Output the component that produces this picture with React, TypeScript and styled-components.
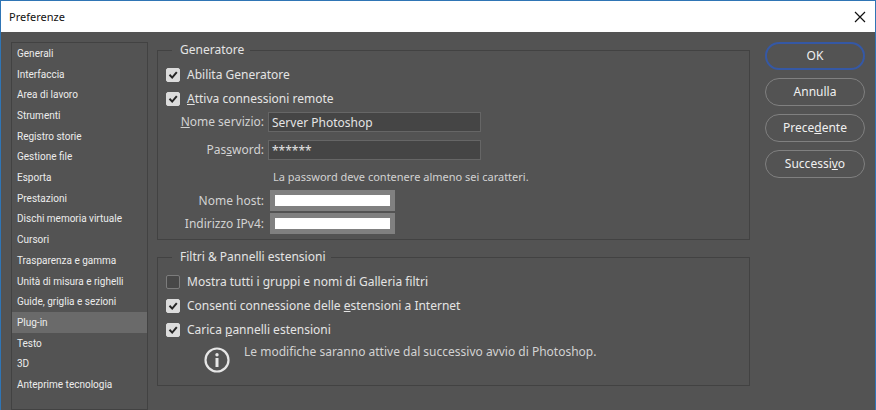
import React, { useState } from 'react';
import type { InputHTMLAttributes, ReactNode } from 'react';
import styled, { createGlobalStyle } from 'styled-components';

const GlobalStyle = createGlobalStyle`
  * { box-sizing: border-box; }
  body {
    margin: 0;
    background: #535353;
    color: #e4e4e4;
    font: 12px/16px "Noto Sans", "Open Sans", sans-serif;
  }
  button, input { font: inherit; color: inherit; }
`;

const Window = styled.div`
  display: flex;
  flex-direction: column;
  min-height: 100vh;
  border: 1px solid #2f75b5;
  border-bottom: 0;
  background: #535353;
`;

const TitleBar = styled.header`
  display: flex;
  align-items: center;
  justify-content: space-between;
  height: 31px;
  padding: 0 9px 0 8px;
  background: #fff;
  color: #111;
`;

const Title = styled.h1`
  margin: 0;
  font-size: 11px;
  font-weight: 400;
`;

const CloseButton = styled.button`
  display: flex;
  padding: 0;
  border: 0;
  background: none;
`;

const Body = styled.div`
  display: flex;
  flex: 1;
  padding: 10px 10px 0;
`;

const Sidebar = styled.nav`
  display: flex;
  flex: 0 0 137px;
  flex-direction: column;
  margin-right: 9px;
  padding-bottom: 14px;
  border: 1px solid #424242;
`;

const SidebarItem = styled.button<{ $active: boolean }>`
  display: flex;
  flex: 1;
  align-items: center;
  padding: 1px 5px 0;
  border: 0;
  background: ${({ $active }) => ($active ? '#6a6a6a' : 'transparent')};
  color: #ececec;
  font: 10px/16px Roboto, sans-serif;
  white-space: nowrap;
`;

const Main = styled.main`
  display: flex;
  flex: 1;
  flex-direction: column;
  gap: 9px;
  min-width: 0;
`;

const Group = styled.fieldset`
  min-width: 0;
  margin: 0;
  padding: 5px 8px;
  border: 1px solid #424242;
`;

const Legend = styled.legend`
  margin-left: 6px;
  padding: 0 6px 0 8px;
`;

const CheckLabel = styled.label`
  display: flex;
  align-items: center;
  gap: 7px;
  height: 24px;
  white-space: nowrap;
`;

const CheckFrame = styled.span`
  display: grid;
  width: 14px;
  height: 14px;

  > * { grid-area: 1 / 1; }
`;

const CheckInput = styled.input`
  width: 14px;
  height: 14px;
  margin: 0;
  appearance: none;
  border: 1px solid #7c7c7c;
  border-radius: 2px;
  background: #484848;

  &:checked {
    border-color: #dcdcdc;
    background: #dcdcdc;
  }

  & + svg { visibility: hidden; pointer-events: none; }
  &:checked + svg { visibility: visible; }
`;

const FieldRow = styled.div<{ $gap: number }>`
  display: flex;
  align-items: center;
  margin-bottom: ${({ $gap }) => $gap}px;
`;

const FieldLabel = styled.label`
  flex: 0 0 98px;
  margin-right: 4px;
  color: #d2d2d2;
  text-align: right;
  white-space: nowrap;
`;

const FieldList = styled.div`
  padding-top: 1px;
`;

const TextField = styled.input`
  width: 213px;
  height: 20px;
  padding: 0 3px;
  border: 1px solid #666;
  background: #454545;
`;

const HiddenValue = styled.input`
  width: 125px;
  height: 21px;
  margin-left: 2px;
  padding: 0;
  border: 5px solid #808080;
  background: #fff;
  color: #222;
`;

const Note = styled.p`
  margin: 0 0 4px 107px;
  color: #d2d2d2;
  font-size: 11px;
  line-height: 18px;
`;

const InfoRow = styled.div`
  display: flex;
  align-items: flex-start;
  gap: 14px;
  padding: 0 0 7px 38px;
  color: #d2d2d2;

  svg { flex: none; margin-top: 5px; }
`;

const InfoText = styled.p`
  margin: 0;
  line-height: 20px;
`;

const Actions = styled.div`
  display: flex;
  flex: 0 0 100px;
  flex-direction: column;
  gap: 8px;
  margin-left: 15px;
`;

const ActionButton = styled.button<{ $primary?: boolean }>`
  height: 28px;
  padding: 0;
  border: ${({ $primary }) => ($primary ? '2px solid #3558a5' : '1px solid #808080')};
  border-radius: 14px;
  background: none;
  color: #f0f0f0;
`;

interface CheckProps extends InputHTMLAttributes<HTMLInputElement> {
  children: ReactNode;
}

function Check({ children, ...rest }: CheckProps) {
  return (
    <CheckLabel>
      <CheckFrame>
        <CheckInput type="checkbox" {...rest} />
        <svg width="14" height="14" viewBox="0 0 14 14" fill="none" aria-hidden="true">
          <path d="M3.5 6.8 L6.2 9.6 L10.8 4.2" stroke="#262626" strokeWidth="2" />
        </svg>
      </CheckFrame>
      <span>{children}</span>
    </CheckLabel>
  );
}

const sections = [
  'Generali',
  'Interfaccia',
  'Area di lavoro',
  'Strumenti',
  'Registro storie',
  'Gestione file',
  'Esporta',
  'Prestazioni',
  'Dischi memoria virtuale',
  'Cursori',
  'Trasparenza e gamma',
  'Unità di misura e righelli',
  'Guide, griglia e sezioni',
  'Plug-in',
  'Testo',
  '3D',
  'Anteprime tecnologia',
];

export default function App() {
  const [section, setSection] = useState('Plug-in');

  return (
    <>
      <GlobalStyle />
      <Window>
        <TitleBar>
          <Title>Preferenze</Title>
          <CloseButton aria-label="Chiudi">
            <svg width="12" height="12" viewBox="0 0 12 12" stroke="#111" strokeWidth="1.2" aria-hidden="true">
              <path d="M1 1 L11 11 M11 1 L1 11" />
            </svg>
          </CloseButton>
        </TitleBar>
        <Body>
          <Sidebar>
            {sections.map((name) => (
              <SidebarItem key={name} $active={name === section} onClick={() => setSection(name)}>
                {name}
              </SidebarItem>
            ))}
          </Sidebar>
          <Main>
            <Group>
              <Legend>Generatore</Legend>
              <Check defaultChecked>Abilita Generatore</Check>
              <Check defaultChecked><u>A</u>ttiva connessioni remote</Check>
              <FieldList>
                <FieldRow $gap={8}>
                  <FieldLabel htmlFor="service"><u>N</u>ome servizio:</FieldLabel>
                  <TextField id="service" defaultValue="Server Photoshop" />
                </FieldRow>
                <FieldRow $gap={8}>
                  <FieldLabel htmlFor="password">Pas<u>s</u>word:</FieldLabel>
                  <TextField id="password" defaultValue="******" />
                </FieldRow>
                <Note>La password deve contenere almeno sei caratteri.</Note>
                <FieldRow $gap={2}>
                  <FieldLabel htmlFor="host">Nome host:</FieldLabel>
                  <HiddenValue id="host" readOnly />
                </FieldRow>
                <FieldRow $gap={0}>
                  <FieldLabel htmlFor="ip">Indirizzo IPv4:</FieldLabel>
                  <HiddenValue id="ip" readOnly />
                </FieldRow>
              </FieldList>
            </Group>
            <Group>
              <Legend>Filtri &amp; Pannelli estensioni</Legend>
              <Check>Mostra tutti i gruppi e nomi di Galleria filtri</Check>
              <Check defaultChecked>Consenti connessione delle <u>e</u>stensioni a Internet</Check>
              <Check defaultChecked>Carica <u>p</u>annelli estensioni</Check>
              <InfoRow>
                <svg width="26" height="26" viewBox="0 0 26 26" fill="none" aria-hidden="true">
                  <circle cx="13" cy="13" r="11.5" stroke="#e6e6e6" strokeWidth="2.2" />
                  <circle cx="13" cy="7.8" r="1.7" fill="#e6e6e6" />
                  <rect x="11.5" y="11" width="3" height="9" fill="#e6e6e6" />
                </svg>
                <InfoText>Le modifiche saranno attive dal successivo avvio di Photoshop.</InfoText>
              </InfoRow>
            </Group>
          </Main>
          <Actions>
            <ActionButton $primary>OK</ActionButton>
            <ActionButton>Annulla</ActionButton>
            <ActionButton>Prece<u>d</u>ente</ActionButton>
            <ActionButton>Successi<u>v</u>o</ActionButton>
          </Actions>
        </Body>
      </Window>
    </>
  );
}
